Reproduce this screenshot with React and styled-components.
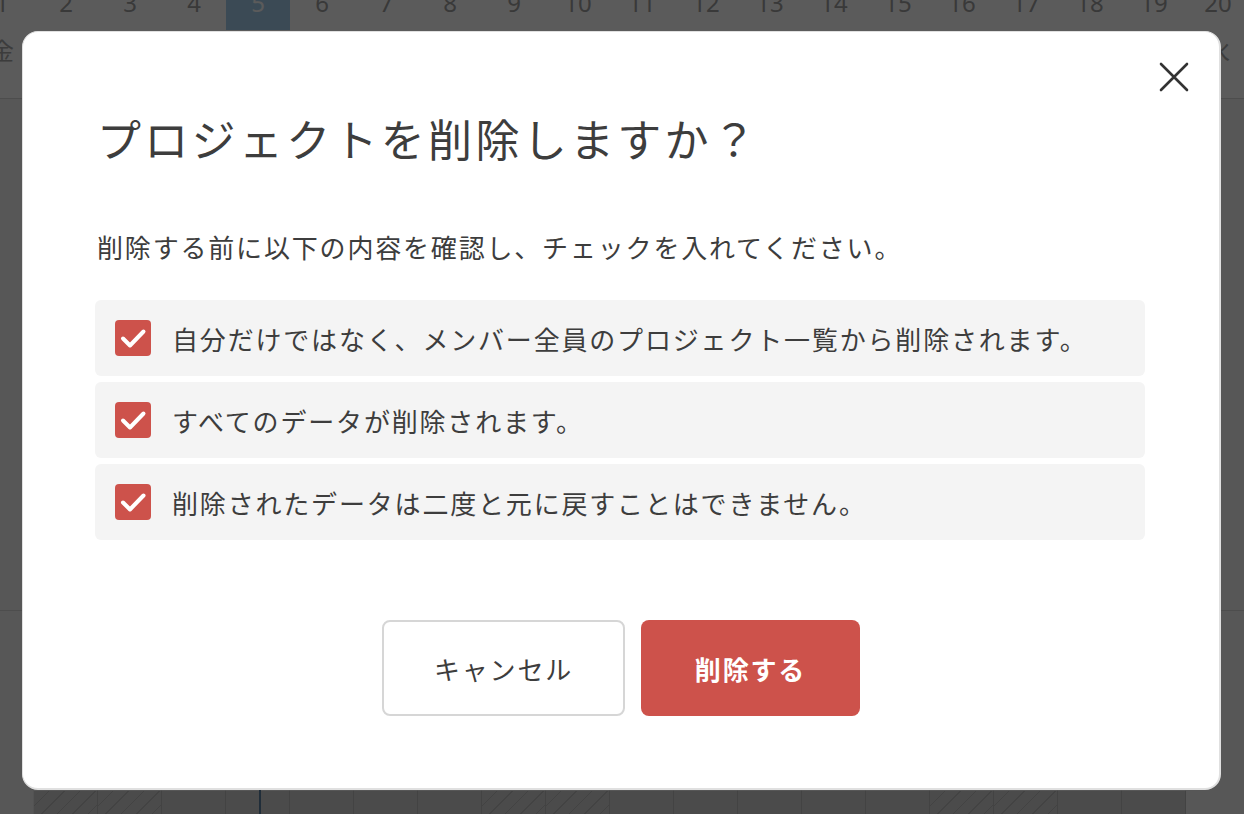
import styled, { createGlobalStyle } from "styled-components";

const GlobalStyle = createGlobalStyle`
  html, body {
    margin: 0;
    padding: 0;
    background: #ffffff;
  }
  body {
    font-family: "Noto Sans CJK JP", "Noto Sans", sans-serif;
    overflow: hidden;
  }
`;

const WEEK = ["金", "土", "日", "月", "火", "水", "木"];
const days = Array.from({ length: 20 }, (_, i) => i + 1);
const isWeekend = (d) => WEEK[(d - 1) % 7] === "土" || WEEK[(d - 1) % 7] === "日";

const CHECKS = [
  "自分だけではなく、メンバー全員のプロジェクト一覧から削除されます。",
  "すべてのデータが削除されます。",
  "削除されたデータは二度と元に戻すことはできません。",
];

const Page = styled.div`
  width: 1244px;
  height: 814px;
  overflow: hidden;
  position: relative;
`;

const Calendar = styled.div`
  margin-left: -30px;
  margin-top: -17px;
  display: flex;
  flex-direction: column;
`;

const Row = styled.div`
  display: grid;
  grid-template-columns: repeat(20, 64px);
  height: ${(p) => p.$h}px;
  border-bottom: ${(p) => (p.$line ? "1px solid #d8d8d8" : "none")};
`;

const NumCell = styled.div`
  box-sizing: border-box;
  padding-bottom: 9px;
  display: flex;
  align-items: center;
  justify-content: center;
  font-family: "Noto Sans", sans-serif;
  font-size: 24px;
  color: ${(p) => (p.$today ? "#ffffff" : "#a0a0a0")};
  background: ${(p) => (p.$today ? "#a6d0ee" : "transparent")};
`;

const DayCell = styled.div`
  display: flex;
  justify-content: center;
  padding-top: 2px;
  font-size: 24px;
  color: #a8a8a8;
`;

const BodyCell = styled.div`
  position: relative;
  border-right: 1px solid ${(p) => (p.$grey ? "#bdbdbd" : "#e8e8e8")};
  background: ${(p) =>
    p.$grey
      ? p.$weekend
        ? "repeating-linear-gradient(135deg, #d2d2d2 0 10px, #bdbdbd 10px 11px)"
        : "#d2d2d2"
      : "#f4f4f4"};
`;

const TodayLine = styled.div`
  position: absolute;
  top: 0;
  bottom: 0;
  left: 33px;
  width: 2px;
  background: #5a7fa0;
`;

const Overlay = styled.div`
  position: absolute;
  inset: 0;
  background: rgba(0, 0, 0, 0.645);
  display: flex;
  justify-content: flex-start;
  align-items: flex-start;
  padding: 31px 0 0 22px;
`;

const Modal = styled.div`
  position: relative;
  box-sizing: border-box;
  width: 1199px;
  padding: 73px 74px 72px;
  background: #ffffff;
  border: 1px solid #e0e0e0;
  border-right-width: 2px;
  border-bottom-width: 2px;
  border-radius: 16px;
  color: #3d3d3d;
`;

const CloseButton = styled.button`
  position: absolute;
  top: 30px;
  right: 30px;
  width: 30px;
  height: 30px;
  padding: 0;
  border: none;
  background: none;
  cursor: pointer;
`;

const Title = styled.h1`
  margin: 0;
  font-size: 44px;
  font-weight: 400;
  line-height: 66px;
  letter-spacing: 0.075em;
`;

const Lead = styled.p`
  margin: 56px 0 0;
  font-size: 26px;
  line-height: 39px;
  letter-spacing: 0.07em;
`;

const CheckList = styled.ul`
  list-style: none;
  margin: 34px 0 0 -2px;
  padding: 0;
  display: flex;
  flex-direction: column;
  gap: 6px;
`;

const CheckItem = styled.li`
  display: flex;
  align-items: center;
  gap: 21px;
  height: 76px;
  padding-left: 20px;
  background: #f4f4f4;
  border-radius: 6px;
  font-size: 26px;
  letter-spacing: 0.07em;
`;

const Box = styled.span`
  flex: none;
  width: 36px;
  height: 36px;
  border-radius: 4px;
  background: #cd524b;
  display: flex;
`;

const Actions = styled.div`
  margin-top: 80px;
  display: flex;
  justify-content: center;
  gap: 16px;
`;

const Button = styled.button`
  box-sizing: border-box;
  height: 96px;
  width: ${(p) => (p.$primary ? "219px" : "243px")};
  border-radius: 8px;
  border: ${(p) => (p.$primary ? "none" : "2px solid #d6d6d6")};
  background: ${(p) => (p.$primary ? "#cd524b" : "#ffffff")};
  color: ${(p) => (p.$primary ? "#ffffff" : "#3d3d3d")};
  font-family: "Noto Sans CJK JP", sans-serif;
  font-size: 26px;
  font-weight: ${(p) => (p.$primary ? 700 : 400)};
  letter-spacing: 0.07em;
  cursor: pointer;
`;

const Check = () => (
  <svg width="36" height="36" viewBox="0 0 36 36">
    <path
      d="M8 18.5 L15 25.5 L28.5 11.5"
      fill="none"
      stroke="#ffffff"
      strokeWidth="4"
      strokeLinecap="round"
      strokeLinejoin="round"
    />
  </svg>
);

const CloseIcon = () => (
  <svg width="30" height="30" viewBox="0 0 30 30">
    <path d="M2 2 L28 28 M28 2 L2 28" stroke="#333" strokeWidth="2.6" strokeLinecap="round" />
  </svg>
);

export default function App() {
  return (
    <Page>
      <GlobalStyle />
      <Calendar>
        <Row $h={47}>
          {days.map((d) => (
            <NumCell key={d} $today={d === 5}>{d}</NumCell>
          ))}
        </Row>
        <Row $h={68} $line>
          {days.map((d) => (
            <DayCell key={d}>{WEEK[(d - 1) % 7]}</DayCell>
          ))}
        </Row>
        <Row $h={511} $line>
          {days.map((d) => (
            <BodyCell key={d}>{d === 5 && <TodayLine />}</BodyCell>
          ))}
        </Row>
        <Row $h={180}>
          {days.map((d) => (
            <BodyCell key={d}>{d === 5 && <TodayLine />}</BodyCell>
          ))}
        </Row>
        <Row $h={40}>
          {days.map((d) => (
            <BodyCell key={d} $grey={d > 1 && d < 20} $weekend={isWeekend(d)}>
              {d === 5 && <TodayLine />}
            </BodyCell>
          ))}
        </Row>
      </Calendar>

      <Overlay>
        <Modal>
          <CloseButton aria-label="閉じる">
            <CloseIcon />
          </CloseButton>
          <Title>プロジェクトを削除しますか？</Title>
          <Lead>削除する前に以下の内容を確認し、チェックを入れてください。</Lead>
          <CheckList>
            {CHECKS.map((text) => (
              <CheckItem key={text}>
                <Box>
                  <Check />
                </Box>
                {text}
              </CheckItem>
            ))}
          </CheckList>
          <Actions>
            <Button>キャンセル</Button>
            <Button $primary>削除する</Button>
          </Actions>
        </Modal>
      </Overlay>
    </Page>
  );
}
